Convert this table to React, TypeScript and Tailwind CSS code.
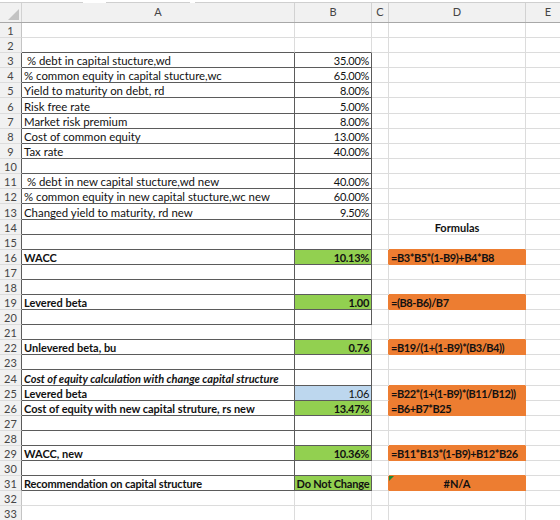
import React from "react";

type FillKey = "green" | "orange" | "blue";
type Cell = {
  text?: string;
  bold?: boolean;
  italic?: boolean;
  align?: "left" | "right" | "center";
  fill?: FillKey;
  border?: boolean;
  tri?: boolean;
  cls?: string;
};

const NROWS = 33;
const TALL_ROWS = new Set([6, 13, 24]);

const RB: Record<string, string> = {
  dark: "border-r-[#5b5b5b]",
  grid: "border-r-[#dcdcdc]",
  hdr: "border-r-[#c4c4c4]",
  green: "border-r-[#92d050]",
  orange: "border-r-[#ed7d31]",
  blue: "border-r-[#bdd7ee]",
};
const BB: Record<string, string> = {
  dark: "border-b-[#5b5b5b]",
  grid: "border-b-[#dcdcdc]",
  hdr: "border-b-[#dcdcdc]",
  green: "border-b-[#92d050]",
  orange: "border-b-[#ed7d31]",
  blue: "border-b-[#bdd7ee]",
};
const BG: Record<FillKey, string> = {
  green: "bg-[#92d050]",
  orange: "bg-[#ed7d31]",
  blue: "bg-[#bdd7ee]",
};

const LABEL = "text-[11.4px]";
const NUM = "text-[11px] tracking-[-0.3px]";
const FORMULA = "text-[11px] tracking-[-0.45px]";

function build(): Cell[][] {
  const g: Cell[][] = [];
  for (let r = 0; r <= NROWS + 1; r++) {
    g.push([{}, {}, {}, {}, {}, {}]);
  }
  const A: Record<number, Cell> = {
    3: { text: "\u00a0% debt in capital stucture,wd", cls: LABEL },
    4: { text: "% common equity in capital stucture,wc", cls: LABEL },
    5: { text: "Yield to maturity on debt, rd", cls: LABEL },
    6: { text: "Risk free rate", cls: LABEL },
    7: { text: "Market risk premium", cls: LABEL },
    8: { text: "Cost of common equity", cls: LABEL },
    9: { text: "Tax rate", cls: LABEL },
    11: { text: "\u00a0% debt in new capital stucture,wd new", cls: LABEL },
    12: { text: "% common equity in new capital stucture,wc new", cls: LABEL },
    13: { text: "Changed yield to maturity, rd new", cls: LABEL },
    16: { text: "WACC", bold: true },
    19: { text: "Levered beta", bold: true },
    22: { text: "Unlevered beta, bu", bold: true },
    24: { text: "Cost of equity calculation with change capital structure", bold: true, italic: true },
    25: { text: "Levered beta", bold: true },
    26: { text: "Cost of equity with new capital struture, rs new", bold: true },
    29: { text: "WACC, new", bold: true },
    31: { text: "Recommendation on capital structure", bold: true, cls: "tracking-[-0.15px]" },
  };
  const B: Record<number, Cell> = {
    3: { text: "35.00%" },
    4: { text: "65.00%" },
    5: { text: "8.00%" },
    6: { text: "5.00%" },
    7: { text: "8.00%" },
    8: { text: "13.00%" },
    9: { text: "40.00%" },
    11: { text: "40.00%" },
    12: { text: "60.00%" },
    13: { text: "9.50%" },
    16: { text: "10.13%", bold: true, fill: "green" },
    19: { text: "1.00", bold: true, fill: "green" },
    22: { text: "0.76", bold: true, fill: "green" },
    25: { text: "1.06", fill: "blue" },
    26: { text: "13.47%", bold: true, fill: "green" },
    29: { text: "10.36%", bold: true, fill: "green" },
    31: { text: "Do Not Change", bold: true, fill: "green", align: "center" },
  };
  const D: Record<number, Cell> = {
    14: { text: "Formulas", bold: true, align: "center" },
    16: { text: "=B3*B5*(1-B9)+B4*B8", bold: true, fill: "orange", cls: FORMULA },
    19: { text: "=(B8-B6)/B7", bold: true, fill: "orange", cls: FORMULA },
    22: { text: "=B19/(1+(1-B9)*(B3/B4))", bold: true, fill: "orange", cls: FORMULA },
    25: { text: "=B22*(1+(1-B9)*(B11/B12))", bold: true, fill: "orange", cls: FORMULA },
    26: { text: "=B6+B7*B25", bold: true, fill: "orange", cls: FORMULA },
    29: { text: "=B11*B13*(1-B9)+B12*B26", bold: true, fill: "orange", cls: FORMULA },
    31: { text: "#N/A", bold: true, fill: "orange", align: "center", tri: true },
  };
  for (let r = 1; r <= NROWS; r++) {
    if (A[r]) g[r][1] = { ...A[r] };
    if (B[r])
      g[r][2] = {
        ...B[r],
        align: B[r].align ?? "right",
        cls: B[r].align === "center" ? "tracking-[-0.2px]" : NUM,
      };
    if (D[r]) g[r][4] = { ...D[r] };
    if (r >= 3 && r <= 31) {
      g[r][1].border = true;
      if (r !== 21 && r !== 30) g[r][2].border = true;
    }
  }
  return g;
}

const grid = build();

function edge(a: Cell | undefined, b: Cell | undefined, base: string): string {
  if (a?.border || b?.border) return "dark";
  if (a?.fill) return a.fill;
  if (b?.fill) return b.fill;
  return base;
}

const COLS = "grid grid-cols-[22px_273px_77px_17px_137px_1fr]";

function Row({ r }: { r: number }) {
  const h = TALL_ROWS.has(r) ? "h-[16px]" : "h-[15px]";
  const cells = grid[r];
  const below = grid[r + 1];
  return (
    <div className={`${COLS} ${h}`}>
      <div
        className={`flex items-end justify-center border-r border-b bg-[#f1f1f1] text-[#454545] leading-[13px] ${
          RB[edge(undefined, cells[1], "hdr")]
        } ${BB.hdr}`}
      >
        {r}
      </div>
      {[1, 2, 3, 4, 5].map((c) => {
        const cell = cells[c];
        const right = c < 5 ? RB[edge(cell, cells[c + 1], "grid")] : "";
        const bottom = BB[edge(cell, below[c], "grid")];
        const align =
          cell.align === "right"
            ? "justify-end pr-[2px]"
            : cell.align === "center"
            ? "justify-center"
            : "justify-start pl-[2px]";
        return (
          <div
            key={c}
            className={`relative flex items-end whitespace-nowrap overflow-visible leading-[13px] text-[#111] ${
              c < 5 ? "border-r" : ""
            } border-b ${right} ${bottom} ${cell.fill ? BG[cell.fill] : ""} ${align} ${
              cell.bold ? "font-bold" : ""
            } ${cell.italic ? "italic" : ""} ${cell.cls ?? ""}`}
          >
            {cell.tri && (
              <svg className="absolute left-0 top-0" width="5" height="5" viewBox="0 0 5 5">
                <polygon points="0,0 5,0 0,5" fill="#1e8a3a" />
              </svg>
            )}
            {cell.text ? <span className="relative z-10">{cell.text}</span> : null}
          </div>
        );
      })}
    </div>
  );
}

export default function App() {
  const rows: number[] = [];
  for (let r = 1; r <= NROWS; r++) rows.push(r);
  return (
    <div
      className="w-[560px] h-[520px] overflow-hidden bg-white text-[11px]"
      style={{ fontFamily: "Lato, 'Noto Sans', sans-serif" }}
    >
      <div className="flex h-[3px]">
        <div className="w-[83px] border-b border-b-[#cfcfcf]" />
        <div className="w-[23px]" />
        <div className="w-[84px] border-b border-b-[#cfcfcf]" />
        <div className="w-[5px]" />
        <div className="flex-1 border-b border-b-[#cfcfcf]" />
      </div>
      <div className={`${COLS} h-[20px] bg-[#f1f1f1] text-[#454545] border-b border-b-[#a8a8a8]`}>
        <div className="relative border-r border-r-[#d2d2d2]">
          <svg className="absolute right-[2px] bottom-[2px]" width="11" height="11" viewBox="0 0 11 11">
            <polygon points="11,0 11,11 0,11" fill="#c3c3c3" />
          </svg>
        </div>
        <div className="flex items-center justify-center border-r border-r-[#d2d2d2]">A</div>
        <div className="flex items-center justify-center border-r border-r-[#d2d2d2]">B</div>
        <div className="flex items-center justify-center border-r border-r-[#d2d2d2]">C</div>
        <div className="flex items-center justify-center border-r border-r-[#d2d2d2]">D</div>
        <div className="flex items-center justify-center pl-[10px]">E</div>
      </div>
      {rows.map((r) => (
        <Row key={r} r={r} />
      ))}
    </div>
  );
}
